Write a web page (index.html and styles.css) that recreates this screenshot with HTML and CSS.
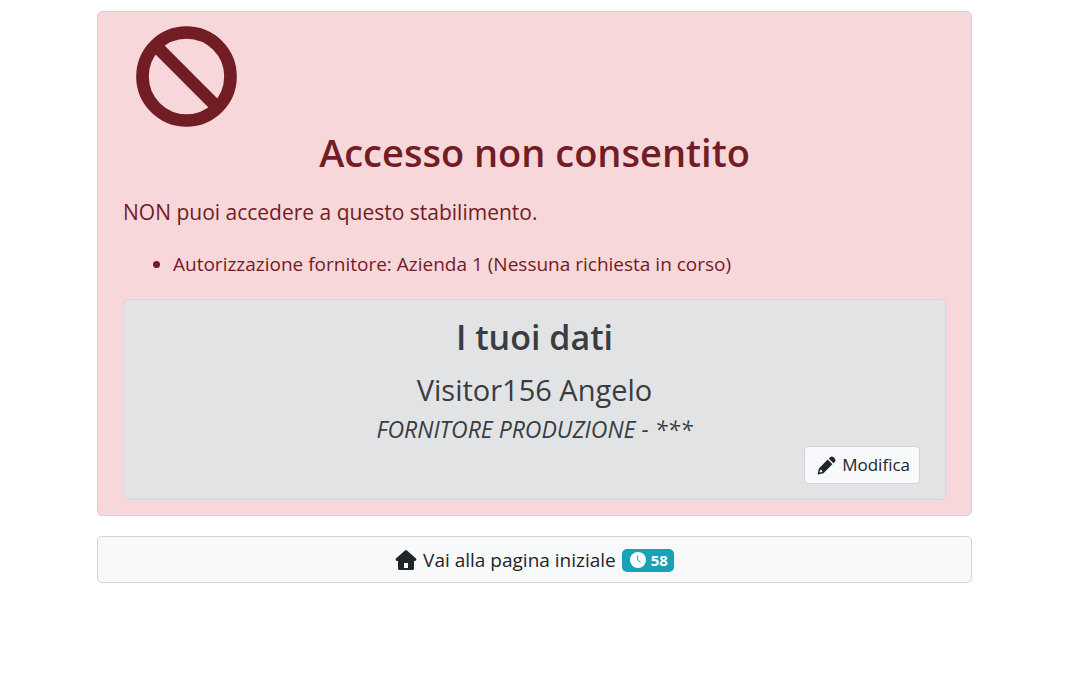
FILE: index.html
```html
<!DOCTYPE html>
<html lang="it">

<head>
	<meta charset="UTF-8">
	<meta name="viewport" content="width=device-width, initial-scale=1.0">
	<title>Accesso non consentito</title>

	<link rel="stylesheet" href="styles.css">
</head>

<body>
	<main class="container">
		<section class="alert -danger">
			<svg class="ban" viewBox="0 0 512 512" aria-hidden="true">
				<circle cx="256" cy="256" r="223" />
				<path d="M103 103L409 409" />
			</svg>
			<h1>Accesso non consentito</h1>
			<p class="message">NON puoi accedere a questo stabilimento.</p>
			<ul class="reasons">
				<li>Autorizzazione fornitore: Azienda 1 (Nessuna richiesta in corso)</li>
			</ul>
			<div class="alert -secondary">
				<h2>I tuoi dati</h2>
				<p class="name">Visitor156 Angelo</p>
				<p class="role">FORNITORE PRODUZIONE - ***</p>
				<div class="actions">
					<button class="btn" type="button">
						<svg class="icon" viewBox="0 0 20 20" aria-hidden="true">
							<path fill-rule="evenodd" d="M11.2 3.8L16.2 8.8L6.8 18.1L1 19.4Q.6 19.4.7 19L2 13.1ZM3.4 14.6L2.7 17.4L5.5 16.8L5.2 15.1Z" />
							<path d="M12.4 2.7L14 1.2Q15.7-.2 17.4 1.3L18.8 2.8Q20.2 4.4 18.8 6L17.3 7.6Z" />
						</svg>
						<span>Modifica</span>
					</button>
				</div>
			</div>
		</section>
		<a class="btn -block" href="#">
			<svg class="icon -home" viewBox="0 0 22 22" aria-hidden="true">
				<path fill-rule="evenodd" d="M10 1.5Q11 .6 12 1.5L21.3 9.8Q22 11.8 20 12H19V19.5Q19 21 17.5 21H4.5Q3 21 3 19.5V12H2Q0 11.8.7 9.8ZM9 14V19H13V14Z" />
			</svg>
			<span>Vai alla pagina iniziale</span>
			<span class="badge">
				<svg class="clock" viewBox="0 0 16 16" aria-hidden="true">
					<circle cx="8" cy="8" r="8" />
					<path d="M7.7 3.5V8.2L10.6 10.2" />
				</svg>
				<span>58</span>
			</span>
		</a>
	</main>
</body>

</html>
```

FILE: styles.css
```css
* {
	box-sizing: border-box;
}

body {
	margin: 0;
	padding: 11px 120px 20px 97px;
	font-family: "Segoe UI", "Open Sans", "Noto Sans", sans-serif;
	font-size: 19px;
	line-height: 30px;
	color: #212529;
	background: #fff;
}

.container {
	display: flex;
	flex-direction: column;
	gap: 20px;
	max-width: 1140px;
	margin: 0 auto;
}

.alert {
	border: 1px solid;
	border-radius: 5px;
}

.alert.-danger {
	padding: 14px 25px 15px;
	color: #721c24;
	background: #f7d7da;
	border-color: #f0c6cb;
}

.alert.-secondary {
	padding: 16px 25px 15px;
	color: #383d41;
	background: #e2e3e5;
	border-color: #d6d8db;
	text-align: center;
}

.ban {
	display: block;
	width: 101px;
	height: 101px;
	margin: 0 13px 2px;
	fill: none;
	stroke: currentColor;
	stroke-width: 64px;
}

h1,
h2,
p {
	margin: 0;
	font-weight: 400;
}

h1 {
	margin-bottom: 21px;
	font-size: 38px;
	line-height: 46px;
	font-weight: 600;
	text-align: center;
}

h2 {
	margin-bottom: 9px;
	font-size: 34px;
	line-height: 42px;
	font-weight: 600;
}

.message {
	font-size: 21px;
	line-height: 33px;
}

.name {
	font-size: 29px;
	line-height: 45px;
}

.role {
	font-size: 23px;
	line-height: 34px;
	font-style: italic;
}

.reasons {
	margin: 20px 0;
	padding-left: 50px;
}

.actions {
	display: flex;
	justify-content: flex-end;
}

.btn {
	display: flex;
	align-items: center;
	justify-content: center;
	gap: 6px;
	padding: 3px 9px 3px 12px;
	font: inherit;
	font-size: 17px;
	color: #212529;
	text-decoration: none;
	background: #f8f9fa;
	border: 1px solid #ced4da;
	border-radius: 4px;
	cursor: pointer;
}

.btn.-block {
	padding: 8px 10px 7px;
	font-size: 19px;
	border-radius: 5px;
}

.icon {
	width: 19px;
	height: 19px;
	fill: currentColor;
}

.icon.-home {
	width: 22px;
	height: 22px;
}

.badge {
	display: flex;
	align-items: center;
	gap: 5px;
	padding: 0 6px 0 8px;
	font-size: 15px;
	line-height: 23px;
	font-weight: 700;
	color: #fff;
	background: #17a2b8;
	border-radius: 5px;
}

.clock {
	width: 16px;
	height: 16px;
	fill: #fff;
}

.clock path {
	fill: none;
	stroke: #17a2b8;
	stroke-width: 1px;
}
```
